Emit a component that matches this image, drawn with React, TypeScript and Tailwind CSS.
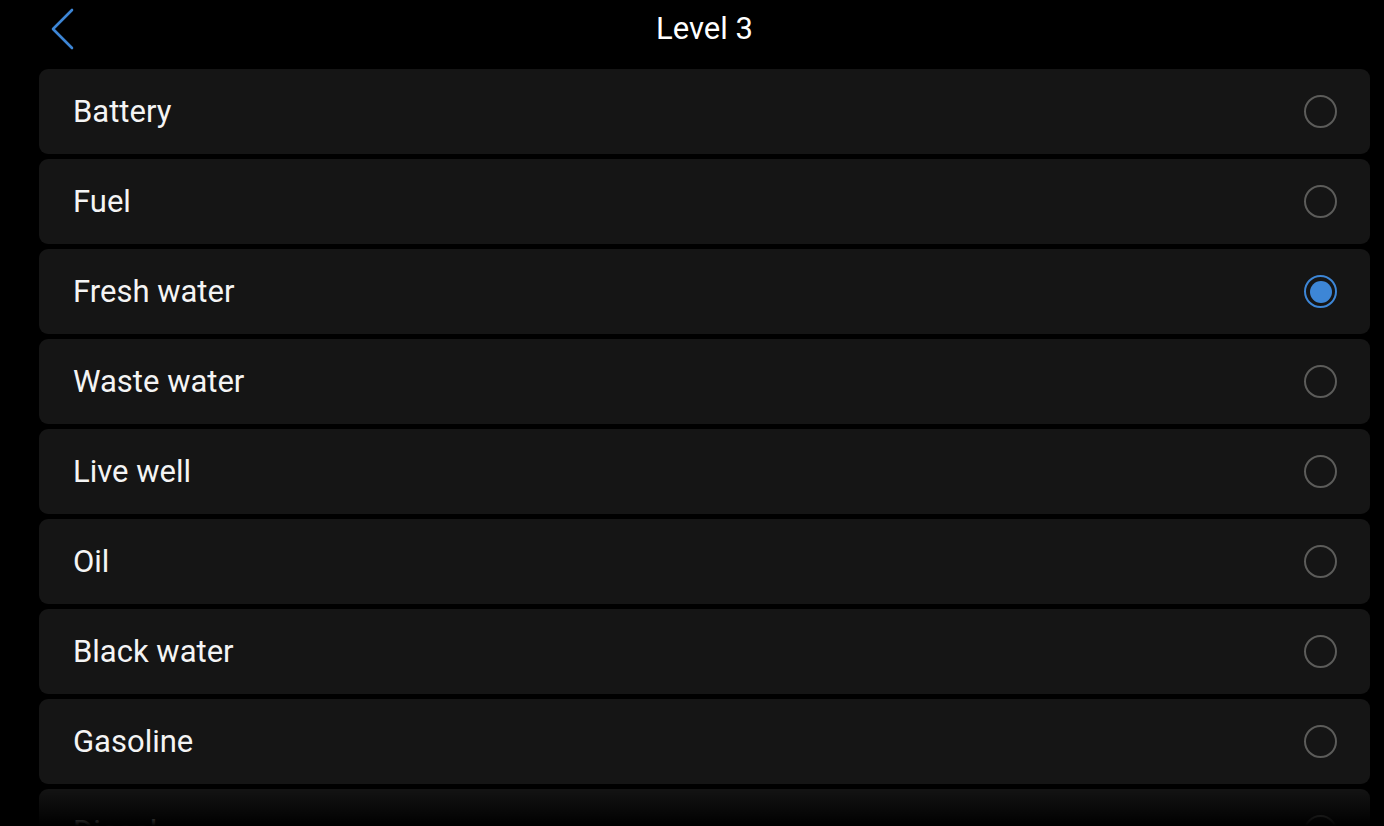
import React from 'react';

const items = [
  'Battery',
  'Fuel',
  'Fresh water',
  'Waste water',
  'Live well',
  'Oil',
  'Black water',
  'Gasoline',
  'Diesel',
];

const Radio: React.FC<{ checked: boolean }> = ({ checked }) =>
  checked ? (
    <div className="w-[33px] h-[33px] rounded-full border-[2.5px] border-[#3d86d6] flex items-center justify-center">
      <div className="w-[22px] h-[22px] rounded-full bg-[#3d86d6]" />
    </div>
  ) : (
    <div className="w-[33px] h-[33px] rounded-full border-[2.5px] border-[#5c5c5a]" />
  );

export default function App() {
  const selected = 'Fresh water';

  return (
    <div
      className="relative w-[1384px] h-[826px] overflow-hidden bg-black text-white"
      style={{ fontFamily: 'Roboto, "Noto Sans", sans-serif' }}
    >
      <div className="relative h-[57px] flex items-center justify-center ml-[39px] mr-[14px]">
        <button className="absolute left-[11px] top-[8px] text-[#3d86d6]">
          <svg width="26" height="42" viewBox="0 0 26 42" fill="none">
            <polyline
              points="22,2 3,21 22,40"
              stroke="currentColor"
              strokeWidth="2.6"
              strokeLinecap="round"
              strokeLinejoin="round"
            />
          </svg>
        </button>
        <h1 className="text-[31px] leading-none">Level 3</h1>
      </div>

      <div className="mt-[12px] ml-[39px] mr-[14px] flex flex-col gap-[5px]">
        {items.map((item) => (
          <div
            key={item}
            className="h-[85px] shrink-0 rounded-[9px] bg-[#151515] flex items-center justify-between pl-[34px] pr-[33px]"
          >
            <span className="text-[31px] leading-none text-[#f4f4f4]">{item}</span>
            <Radio checked={item === selected} />
          </div>
        ))}
      </div>

      <div className="absolute left-0 right-0 bottom-0 h-[40px] bg-gradient-to-b from-transparent to-black pointer-events-none" />
    </div>
  );
}
